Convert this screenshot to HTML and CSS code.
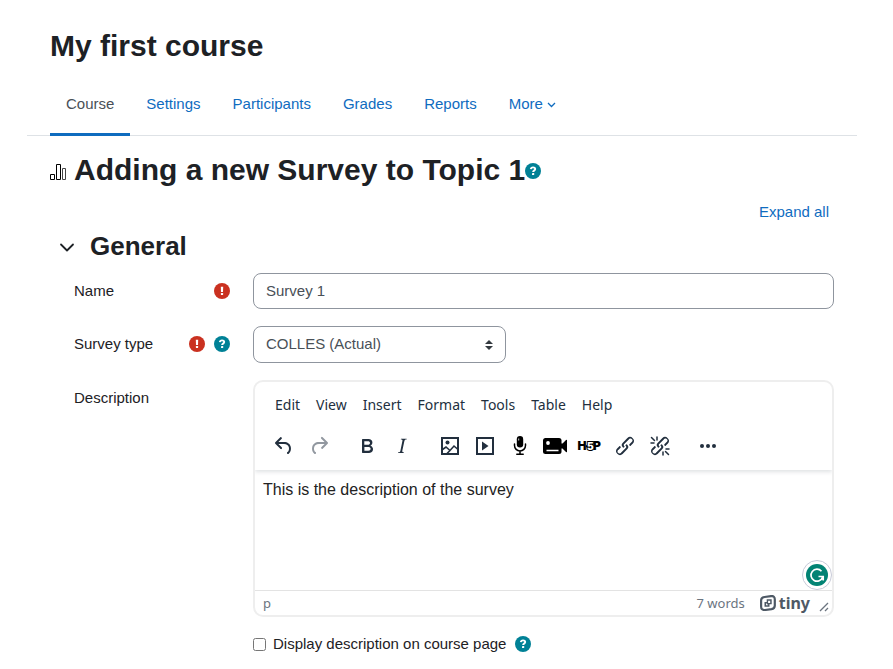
FILE: index.html
```html
<!DOCTYPE html>
<html lang="en">
<head>
<meta charset="utf-8">
<title>My first course</title>
<link rel="stylesheet" href="styles.css">
</head>
<body>
<svg class="defs" aria-hidden="true">
  <symbol id="help" viewBox="0 0 16 16"><circle cx="8" cy="8" r="8" fill="#008196"/><path d="M5.800 6.200C6 4.900 6.900 4.400 8 4.400c1.300 0 2.200.700 2.200 1.700 0 1.500-2.100 1.500-2.100 2.900" fill="none" stroke="#fff" stroke-width="1.900"/><rect x="7" y="10" width="2.200" height="2.100" rx=".4" fill="#fff"/></symbol>
  <symbol id="required" viewBox="0 0 16 16"><circle cx="8" cy="8" r="8" fill="#ca3120"/><path d="M6.800 3.800h2.400L9 9H7z" fill="#fff"/><rect x="6.900" y="10" width="2.200" height="2.100" rx=".5" fill="#fff"/></symbol>
  <symbol id="chain" viewBox="0 0 24 24"><path d="M6.200 12.300a1 1 0 0 1 1.400 1.400l-2 2a2 2 0 1 0 2.600 2.800l4.800-4.800a1 1 0 0 0 0-1.400 1 1 0 1 1 1.400-1.300 2.900 2.900 0 0 1 0 4L9.600 20a3.900 3.900 0 0 1-5.500-5.500l2-2Zm11.600-.6a1 1 0 0 1-1.400-1.400l2-2a2 2 0 1 0-2.600-2.800L11 10.300a1 1 0 0 0 0 1.400A1 1 0 1 1 9.600 13a2.900 2.900 0 0 1 0-4L14.400 4a3.900 3.900 0 0 1 5.500 5.500l-2 2Z"/></symbol>
</svg>
<header class="page-header"><h1>My first course</h1></header>
<nav class="tabs" aria-label="Course">
  <a class="tab active" href="#">Course</a>
  <a class="tab" href="#">Settings</a>
  <a class="tab" href="#">Participants</a>
  <a class="tab" href="#">Grades</a>
  <a class="tab" href="#">Reports</a>
  <a class="tab" href="#">More<svg class="caret" viewBox="0 0 9 8"><path d="m1 3 3.500 3.500L8 3" fill="none" stroke="currentColor" stroke-width="1.300"/></svg></a>
</nav>
<main>
  <h2 class="title">
    <svg class="survey-icon" viewBox="0 0 17 17"><path d="M.5 11.500h4v5h-4zM6.500 1.500h4v15h-4z" fill="#fff" stroke="#000"/><path d="M12.500 5.500h3v11h-3z" fill="#fff" stroke="#444"/></svg>
    <span>Adding a new Survey to Topic 1</span><button type="button" class="icon-button" aria-label="Help with Survey"><svg class="badge"><use href="#help"/></svg></button>
  </h2>
  <div class="expand"><a href="#">Expand all</a></div>
  <form>
    <h3 class="section"><button type="button" class="icon-button toggle" aria-label="Collapse General"><svg viewBox="0 0 16 10"><path d="m2 2.500 6 6 6-6" fill="none" stroke="#1d2125" stroke-width="1.800" stroke-linecap="round" stroke-linejoin="round"/></svg></button>General</h3>
    <div class="row">
      <div class="label"><label for="name">Name</label><span class="marks"><svg class="badge"><use href="#required"/></svg></span></div>
      <input class="control" id="name" type="text" value="Survey 1">
    </div>
    <div class="row">
      <div class="label"><label for="type">Survey type</label><span class="marks"><svg class="badge"><use href="#required"/></svg><button type="button" class="icon-button" aria-label="Help with Survey type"><svg class="badge"><use href="#help"/></svg></button></span></div>
      <div class="select-wrap"><select class="control" id="type"><option>COLLES (Actual)</option></select><svg class="arrows" viewBox="0 0 8 10"><path d="M0 4h8L4 0zM0 6h8l-4 4z" fill="#343a40"/></svg></div>
    </div>
    <div class="row editor-row">
      <div class="label"><label for="description">Description</label></div>
      <div class="editor">
        <div class="editor-head">
          <div class="menubar">
            <button type="button">Edit</button><button type="button">View</button><button type="button">Insert</button><button type="button">Format</button><button type="button">Tools</button><button type="button">Table</button><button type="button">Help</button>
          </div>
          <div class="toolbar">
            <div class="group">
              <button type="button" aria-label="Undo"><svg viewBox="0 0 24 24"><path d="M6.400 8H12c3.700 0 6.200 2 6.800 5.100.6 2.700-.4 5.600-2.300 6.800a1 1 0 0 1-1-1.800c1.100-.6 1.800-2.700 1.400-4.600-.5-2.100-2.100-3.500-4.900-3.500H6.400l3.300 3.300a1 1 0 1 1-1.400 1.400l-5-5a1 1 0 0 1 0-1.400l5-5a1 1 0 0 1 1.400 1.400L6.400 8Z"/></svg></button>
              <button type="button" aria-label="Redo" disabled><svg viewBox="0 0 24 24"><path d="M17.600 10H12c-2.800 0-4.400 1.400-4.900 3.500-.4 2 .3 4 1.400 4.600a1 1 0 1 1-1 1.800c-2-1.200-2.900-4.100-2.300-6.800.6-3 3-5.100 6.800-5.100h5.600l-3.300-3.300a1 1 0 1 1 1.400-1.400l5 5a1 1 0 0 1 0 1.400l-5 5a1 1 0 0 1-1.400-1.400l3.300-3.300Z"/></svg></button>
            </div>
            <div class="group">
              <button type="button" aria-label="Bold"><svg viewBox="0 0 24 24"><path d="M7.800 19c-.3 0-.5 0-.6-.2l-.2-.5V5.700c0-.2 0-.4.2-.5l.6-.2h5c1.500 0 2.700.3 3.500 1 .7.6 1.100 1.400 1.100 2.500a3 3 0 0 1-.6 1.900c-.4.6-1 1-1.600 1.200.4.1.9.3 1.300.6s.8.7 1 1.200c.4.4.5 1 .5 1.600 0 1.300-.4 2.300-1.300 3-.8.7-2.100 1-3.800 1H7.800Zm5-8.300c.6 0 1.200-.1 1.600-.5.4-.3.6-.7.6-1.300 0-1.100-.8-1.700-2.300-1.700H9.300v3.500h3.400Zm.5 6c.7 0 1.300-.1 1.700-.4.4-.4.6-.9.6-1.500s-.2-1-.7-1.400c-.4-.3-1-.4-2-.4H9.400v3.800h4Z"/></svg></button>
              <button type="button" aria-label="Italic"><svg viewBox="0 0 24 24"><path d="m16.700 4.700-.1.900h-.3c-.6 0-1 0-1.400.3-.3.3-.4.6-.5 1.100l-2.100 9.800v.6c0 .5.4.8 1.400.8h.2l-.2.800H8l.2-.8h.2c1.100 0 1.800-.5 2-1.500l2-9.800.1-.5c0-.6-.4-.8-1.400-.8h-.3l.2-.9h5.800Z"/></svg></button>
            </div>
            <div class="group">
              <button type="button" aria-label="Image"><svg viewBox="0 0 24 24"><path d="M4 4h16v16H4z" fill="none" stroke="currentColor" stroke-width="2"/><circle cx="9.500" cy="8.500" r="2"/><path d="m4.500 15.500 3.500-2.500 4 3.500 4-4.500 4 3.500M8.500 20l3.500-3.500" fill="none" stroke="currentColor" stroke-width="1.600"/></svg></button>
              <button type="button" aria-label="Multimedia"><svg viewBox="0 0 24 24"><path d="M4 4h16v16H4z" fill="none" stroke="currentColor" stroke-width="2"/><path d="M9 7.500v9l6.500-4.500z"/></svg></button>
              <button type="button" class="black" aria-label="Record audio"><svg viewBox="0 0 24 24"><rect x="8.800" y="2" width="6.400" height="11.500" rx="3.200"/><path d="M6.500 10v1.500a5.500 5.500 0 0 0 11 0V10M12 17v3M8.800 20.300h6.400" fill="none" stroke="currentColor" stroke-width="1.500" stroke-linecap="round"/><path d="M10.700 4.500v2" stroke="#ccc"/></svg></button>
              <button type="button" class="black" aria-label="Record video"><svg viewBox="0 0 24 24"><rect x="0" y="4" width="18.500" height="16" rx="2.500"/><path d="M18 9.500h1.500L23 6q1-.6 1 .5v11q0 1.100-1 .5l-3.500-3.500H18z"/><circle cx="5" cy="9" r="1.900" fill="#fff"/><path d="M3.500 16.500h12" stroke="#fff" stroke-width="1.500"/></svg></button>
              <button type="button" class="black" aria-label="H5P"><svg viewBox="0 0 24 24"><text x="-.5" y="16" class="h5p">H</text><text x="15" y="16" class="h5p">P</text><path d="M8 12.300h4" stroke="#000" stroke-width="2"/><text x="9" y="16" class="h5p five">5</text></svg></button>
              <button type="button" aria-label="Link"><svg viewBox="0 0 24 24"><use href="#chain"/></svg></button>
              <button type="button" aria-label="Unlink"><svg viewBox="0 0 24 24"><use href="#chain"/><path d="M9 3v3M3.500 3.500l3 3M3 9h3M15 18v3M18 15h3M17.500 17.500l3 3" fill="none" stroke="currentColor" stroke-width="1.500" stroke-linecap="round"/></svg></button>
            </div>
            <div class="group">
              <button type="button" aria-label="More tools"><svg viewBox="0 0 24 24"><circle cx="6" cy="12" r="2"/><circle cx="12" cy="12" r="2"/><circle cx="18" cy="12" r="2"/></svg></button>
            </div>
          </div>
        </div>
        <div class="editor-body">
          <textarea id="description">This is the description of the survey</textarea>
          <button type="button" class="checker" aria-label="Writing assistant"><svg viewBox="0 0 22 22"><circle cx="11" cy="11" r="11" fill="#028374"/><path d="M15.500 7.200A6 6 0 1 0 16.700 13M12.500 12.500h4.700v4" fill="none" stroke="#fff" stroke-width="1.700"/></svg></button>
        </div>
        <div class="status">
          <span>p</span><span class="words">7 words</span>
          <span class="brand"><svg viewBox="0 0 16 16"><path d="M4.500 2 11 1.100Q14.800.7 14.800 4.500v6q0 3.200-3.300 3.700L5 15q-3.900.3-3.900-3.500v-6Q1.100 2.500 4.500 2z" fill="none" stroke="currentColor" stroke-width="2.200"/><path d="M6.700 4.300h5v5H9.500v2.500h-5V7h2.200zm1.400 1.500v2.100h2.100V5.800zM6 8.400v1.900h2.100v-.9H6.900v-1z" fill="currentColor" fill-rule="evenodd"/></svg>tiny</span>
          <svg class="resize" viewBox="0 0 10 10"><path d="m1 9 8-8M6 9l3-3" stroke="currentColor" stroke-width="1.300"/></svg>
        </div>
      </div>
    </div>
    <div class="row">
      <div class="check"><input type="checkbox" id="display"><label for="display">Display description on course page</label><button type="button" class="icon-button" aria-label="Help with Display description"><svg class="badge"><use href="#help"/></svg></button></div>
    </div>
  </form>
</main>
</body>
</html>
```
FILE: styles.css
```css
* { box-sizing: border-box; }
body {
  margin: 0;
  padding: 28px 36px 0 27px;
  background: #fff;
  color: #1d2125;
  font: 15px/22px "Liberation Sans", Arial, sans-serif;
}
.defs { position: absolute; width: 0; height: 0; }
svg { display: block; flex: none; }
h1, h2, h3 { margin: 0; font-weight: 700; }
h1, h2 { font-size: 30px; line-height: 36px; }
a { color: #0f6cbf; text-decoration: none; }
button { padding: 0; border: 0; background: none; color: inherit; font: inherit; }
.page-header, main { padding: 0 23px; }
.tabs {
  display: flex;
  margin-top: 8px;
  padding: 0 23px;
  border-bottom: 1px solid #dee2e6;
}
.tab {
  display: flex;
  align-items: center;
  gap: 4px;
  height: 64px;
  margin-bottom: -1px;
  padding: 3px 16px 0;
  border-bottom: 3px solid transparent;
}
.tab.active { border-color: #0f6cbf; color: #495057; }
.caret { width: 9px; height: 8px; }
.title { display: flex; align-items: center; margin-top: 16px; }
.title svg { margin-top: 2px; }
.survey-icon { width: 17px; height: 17px; margin-right: 7px; }
.badge { width: 16px; height: 16px; }
.expand { margin: 13px 5px 0; text-align: right; }
.section {
  display: flex;
  align-items: center;
  gap: 15px;
  margin: 8px 0 11px 9px;
  font-size: 26px;
  line-height: 31px;
}
.toggle svg { width: 16px; height: 10px; }
.row {
  display: grid;
  grid-template-columns: 156px minmax(0, 1fr);
  column-gap: 23px;
  margin: 0 0 17px 24px;
}
.label {
  display: flex;
  justify-content: space-between;
  align-items: center;
  padding-bottom: 1px;
}
.marks { display: flex; gap: 9px; }
.control {
  width: 100%;
  height: 36px;
  padding: 0 12px 2px;
  border: 1px solid #8f959e;
  border-radius: 8px;
  background: #fff;
  color: #495057;
  font: inherit;
}
.select-wrap { position: relative; width: 253px; }
select.control { height: 37px; display: block; appearance: none; }
.arrows { position: absolute; right: 13px; top: 14px; width: 8px; height: 10px; pointer-events: none; }
.editor-row { margin-bottom: 16px; }
.editor-row .label { align-items: flex-start; padding-top: 7px; }
.editor {
  overflow: hidden;
  border: 2px solid #eee;
  border-radius: 10px;
  color: #222f3e;
  font: 13px/20px "Noto Sans", sans-serif;
}
.editor-head { position: relative; z-index: 1; height: 88px; box-shadow: 0 2px 4px rgba(34, 47, 62, .14); }
.menubar { display: flex; gap: 16px; padding: 13px 20px 0; font-size: 14px; }
.toolbar { display: flex; gap: 13px; padding: 14px 11px 0; }
.group { display: flex; }
.group button { display: flex; justify-content: center; align-items: center; width: 35px; height: 34px; }
.group svg { width: 24px; height: 24px; fill: currentColor; overflow: visible; }
.group button:disabled { color: #9298a0; }
.group .black { color: #000; }
.h5p { font: 900 12px Inter, sans-serif; }
.five { font-size: 10px; fill: #fff; stroke: #000; stroke-width: 2px; paint-order: stroke; }
.editor-body { position: relative; height: 120px; }
textarea {
  display: block;
  width: 100%;
  height: 100%;
  padding: 9px 8px;
  border: 0;
  resize: none;
  color: #222;
  font: 16px/22px "Liberation Sans", Arial, sans-serif;
}
.checker {
  position: absolute;
  right: 0;
  bottom: 0;
  padding: 3px;
  border: 1px solid #c8cad8;
  border-radius: 50%;
  background: #fff;
}
.checker svg { width: 22px; height: 22px; }
.status {
  display: flex;
  align-items: center;
  height: 25px;
  padding: 0 3px 0 8px;
  border-top: 1px solid #e3e3e3;
  color: #6b747f;
}
.words { margin-left: auto; }
.brand {
  display: flex;
  align-items: center;
  gap: 3px;
  margin: 0 9px 0 15px;
  color: #4e5965;
  font-size: 16px;
  font-weight: 700;
}
.brand svg { width: 16px; height: 16px; }
.resize { align-self: flex-end; width: 10px; height: 10px; margin-bottom: 3px; }
.check { grid-column: 2; display: flex; align-items: center; }
.check input { width: 13px; height: 13px; margin: 0 7px 0 0; }
.check .icon-button { margin-left: 9px; }
```
